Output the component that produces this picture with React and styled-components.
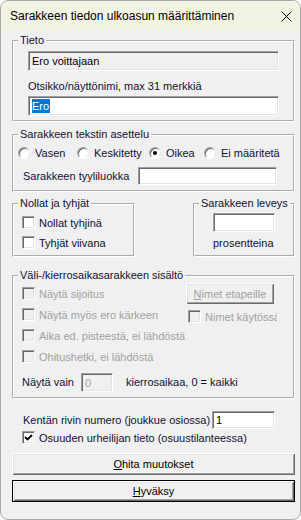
import React from 'react'
import styled, { createGlobalStyle } from 'styled-components'

const Global = createGlobalStyle`
  html, body {
    margin: 0;
    background: #fff;
  }
  body {
    font-family: "Liberation Sans", Arial, sans-serif;
    font-size: 11px;
    color: #101030;
  }
`

const Window = styled.div`
  width: 301px;
  height: 520px;
  box-sizing: border-box;
  border: 1px solid #a8a8a8;
  border-radius: 8px;
  overflow: hidden;
  background: #f0f0f0;
  display: flex;
  flex-direction: column;
`

const TitleBar = styled.div`
  height: 30px;
  flex: none;
  display: flex;
  align-items: center;
  justify-content: space-between;
  padding: 0 8px 0 9px;
  background: #f2f4e3;
  font-size: 12px;
  color: #000;
`

const Body = styled.div`
  display: flex;
  flex-direction: column;
  padding: 3px 5px 0 11px;
`

const Group = styled.fieldset`
  margin: ${p => p.$mt || 0}px 0 0;
  padding: 0 4px;
  border: 2px groove #fff;
  min-width: 0;
  width: ${p => (p.$w ? p.$w + 'px' : 'auto')};
  box-sizing: border-box;
  flex: ${p => (p.$w ? 'none' : '1')};
`

const Legend = styled.legend`
  padding: 0 2px;
  line-height: 13px;
  font-size: 11px;
  white-space: nowrap;
`

const GroupBody = styled.div`
  padding: ${p => p.$pad};
  display: flex;
  flex-direction: column;
`

const Field = styled.div`
  height: ${p => p.$h || 20}px;
  width: ${p => (p.$w ? p.$w + 'px' : 'auto')};
  box-sizing: border-box;
  flex: none;
  background: ${p => (p.$plain ? '#f0f0f0' : '#fff')};
  border-top: 1px solid #a0a0a0;
  border-left: 1px solid #a0a0a0;
  border-bottom: 1px solid #fff;
  border-right: 1px solid #fff;
  box-shadow: inset 1px 1px 0 #696969, inset -1px -1px 0 #e3e3e3;
  display: flex;
  align-items: center;
  padding-left: 3px;
  color: ${p => (p.$disabled ? '#a0a0a0' : '#000')};
`

const Selected = styled.span`
  background: #0078d7;
  color: #fff;
  line-height: 14px;
  padding-right: 1px;
`

const Label = styled.div`
  line-height: 13px;
  margin-top: ${p => p.$mt || 0}px;
  width: ${p => (p.$w ? p.$w + 'px' : 'auto')};
  flex: none;
  white-space: nowrap;
`

const Row = styled.div`
  display: flex;
  align-items: center;
  margin-top: ${p => p.$mt || 0}px;
  padding-left: ${p => p.$pl || 0}px;
`

const Option = styled.label`
  display: flex;
  align-items: center;
  gap: ${p => p.$gap || 4}px;
  height: ${p => p.$h || 13}px;
  width: ${p => (p.$w ? p.$w + 'px' : 'auto')};
  flex: none;
  white-space: nowrap;
  overflow: ${p => (p.$clip ? 'hidden' : 'visible')};
  color: ${p => (p.$disabled ? '#a0a0a0' : 'inherit')};
`

const RadioDot = styled.span`
  width: 12px;
  height: 12px;
  box-sizing: border-box;
  border-radius: 50%;
  flex: none;
  background: #fff;
  border: 1px solid;
  border-color: #a0a0a0 #e8e8e8 #fff #a0a0a0;
  box-shadow: inset 1px 1px 0 #696969;
  display: flex;
  align-items: center;
  justify-content: center;

  &::after {
    content: '';
    width: 4px;
    height: 4px;
    border-radius: 50%;
    background: ${p => (p.$on ? '#000' : 'transparent')};
  }
`

const Box = styled.span`
  width: 13px;
  height: 13px;
  box-sizing: border-box;
  flex: none;
  background: ${p => (p.$disabled ? '#f0f0f0' : '#fff')};
  border-top: 1px solid #a0a0a0;
  border-left: 1px solid #a0a0a0;
  border-bottom: 1px solid #fff;
  border-right: 1px solid #fff;
  box-shadow: inset 1px 1px 0 #696969, inset -1px -1px 0 #e3e3e3;
  display: flex;
  align-items: center;
  justify-content: center;
`

const Button = styled.div`
  height: ${p => p.$h || 22}px;
  width: ${p => (p.$w ? p.$w + 'px' : 'auto')};
  box-sizing: border-box;
  flex: none;
  display: flex;
  align-items: center;
  justify-content: center;
  margin-top: ${p => p.$mt || 0}px;
  background: #f0f0f0;
  color: ${p => (p.$disabled ? '#a0a0a0' : '#000')};
  border: ${p => (p.$default ? '1px solid #000' : 'none')};
  box-shadow: inset 1px 1px 0 #fff, inset -1px -1px 0 #696969,
    inset 2px 2px 0 #e3e3e3, inset -2px -2px 0 #a0a0a0;

  u {
    text-decoration: underline;
  }
`

const SideBySide = styled.div`
  display: flex;
  justify-content: space-between;
  align-items: stretch;
  margin-top: ${p => p.$mt || 0}px;
`

const Columns = styled.div`
  display: flex;
`

const Column = styled.div`
  display: flex;
  flex-direction: column;
  width: ${p => (p.$w ? p.$w + 'px' : 'auto')};
  padding-left: ${p => p.$pl || 0}px;
  flex: none;
`

const Close = () => (
  <svg width="11" height="11" viewBox="0 0 11 11">
    <path d="M0.5 0.5 L10.5 10.5 M10.5 0.5 L0.5 10.5" stroke="#000" strokeWidth="1" />
  </svg>
)

const Check = () => (
  <svg width="9" height="9" viewBox="0 0 9 9">
    <path d="M1 4 L3.5 6.5 L8 2" stroke="#000" strokeWidth="1.8" fill="none" />
  </svg>
)

const Checkbox = ({ children, checked, disabled, w, h, clip }) => (
  <Option $disabled={disabled} $w={w} $h={h} $clip={clip}>
    <Box $disabled={disabled}>{checked && <Check />}</Box>
    {children}
  </Option>
)

const Radio = ({ children, on, w }) => (
  <Option $w={w} $gap={5}>
    <RadioDot $on={on} />
    {children}
  </Option>
)

export default function App() {
  return (
    <>
      <Global />
      <Window>
        <TitleBar>
          <span>Sarakkeen tiedon ulkoasun määrittäminen</span>
          <Close />
        </TitleBar>
        <Body>
          <Group>
            <Legend>Tieto</Legend>
            <GroupBody $pad="4px 10px 4px 10px">
              <Field $plain>Ero voittajaan</Field>
              <Label $mt={9}>Otsikko/näyttönimi, max 31 merkkiä</Label>
              <Field style={{ marginTop: 3 }}>
                <Selected>Ero</Selected>
              </Field>
            </GroupBody>
          </Group>

          <Group $mt={6}>
            <Legend>Sarakkeen tekstin asettelu</Legend>
            <GroupBody $pad="5px 12px 5px 0">
              <Row>
                <Radio w={59}>Vasen</Radio>
                <Radio w={72}>Keskitetty</Radio>
                <Radio w={55} on>Oikea</Radio>
                <Radio>Ei määritetä</Radio>
              </Row>
              <Row $mt={8} $pl={5}>
                <Label $w={115}>Sarakkeen tyyliluokka</Label>
                <Field $h={18} style={{ flex: 1 }} />
              </Row>
            </GroupBody>
          </Group>

          <SideBySide $mt={5}>
            <Group $w={123}>
              <Legend>Nollat ja tyhjät</Legend>
              <GroupBody $pad="6px 0 6px 4px">
                <Checkbox>Nollat tyhjinä</Checkbox>
                <Row $mt={7}>
                  <Checkbox>Tyhjät viivana</Checkbox>
                </Row>
              </GroupBody>
            </Group>
            <Group $w={102}>
              <Legend>Sarakkeen leveys</Legend>
              <GroupBody $pad="3px 0 5px 14px">
                <Field $w={62} $h={19} />
                <Label $mt={5}>prosentteina</Label>
              </GroupBody>
            </Group>
          </SideBySide>

          <Group $mt={12}>
            <Legend>Väli-/kierrosaikasarakkeen sisältö</Legend>
            <GroupBody $pad="1px 0 5px 4px">
              <Columns>
                <Column $w={164}>
                  <Checkbox disabled h={21}>Näytä sijoitus</Checkbox>
                  <Checkbox disabled h={21}>Näytä myös ero kärkeen</Checkbox>
                  <Checkbox disabled h={21}>Aika ed. pisteestä, ei lähdöstä</Checkbox>
                  <Checkbox disabled h={21}>Ohitushetki, ei lähdöstä</Checkbox>
                </Column>
                <Column>
                  <Button $disabled $w={88} $h={21}>
                    <span><u>N</u>imet etapeille</span>
                  </Button>
                  <Row $mt={2} $pl={2}>
                    <Checkbox disabled w={89} h={21} clip>Nimet käytössä</Checkbox>
                  </Row>
                </Column>
              </Columns>
              <Row $mt={6}>
                <Label $w={59}>Näytä vain</Label>
                <Field $plain $disabled $w={32} $h={19}>0</Field>
                <Label style={{ marginLeft: 13 }}>kierrosaikaa, 0 = kaikki</Label>
              </Row>
            </GroupBody>
          </Group>

          <Row $mt={12} $pl={11}>
            <Label $w={189}>Kentän rivin numero (joukkue osiossa)</Label>
            <Field $w={63} $h={18}>1</Field>
          </Row>
          <Row $mt={2} $pl={10}>
            <Checkbox checked>Osuuden urheilijan tieto (osuustilanteessa)</Checkbox>
          </Row>
          <Button $mt={9}>
            <span><u>O</u>hita muutokset</span>
          </Button>
          <Button $mt={5} $default>
            <span><u>H</u>yväksy</span>
          </Button>
        </Body>
      </Window>
    </>
  )
}
